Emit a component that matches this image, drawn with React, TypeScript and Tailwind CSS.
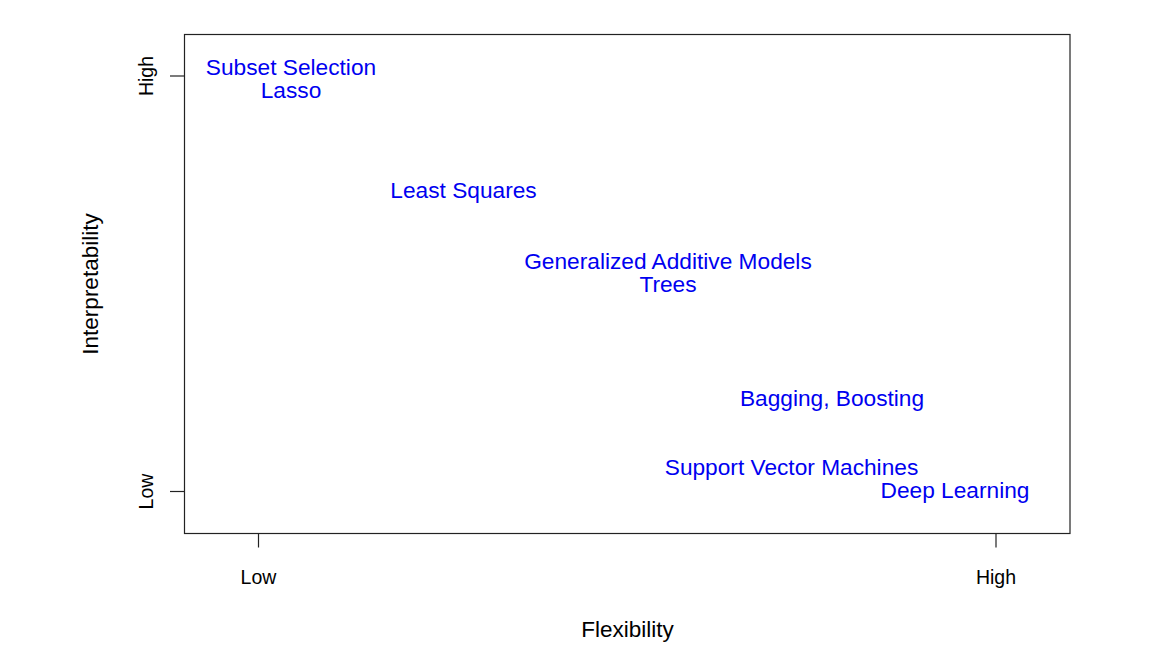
const LABELS = [
  { text: "Subset Selection", x: 291, y: 74.5 },
  { text: "Lasso", x: 291, y: 97.5 },
  { text: "Least Squares", x: 463.5, y: 197.5 },
  { text: "Generalized Additive Models", x: 668, y: 269 },
  { text: "Trees", x: 668, y: 292 },
  { text: "Bagging, Boosting", x: 832, y: 406 },
  { text: "Support Vector Machines", x: 791.5, y: 474.5 },
  { text: "Deep Learning", x: 955, y: 497.5 },
];

export default function App() {
  return (
    <div className="w-[1158px] h-[659px] bg-white overflow-hidden font-['Liberation_Sans',Arial,Helvetica,sans-serif]">
      <svg width={1158} height={659} viewBox="0 0 1158 659">
        {/* plot box */}
        <rect x={184.5} y={34.5} width={885.5} height={499} fill="none" stroke="#222" strokeWidth={1.2} />

        {/* y ticks */}
        <line x1={170} y1={76} x2={184.5} y2={76} stroke="#222" strokeWidth={1.2} />
        <line x1={170} y1={491.5} x2={184.5} y2={491.5} stroke="#222" strokeWidth={1.2} />
        {/* x ticks */}
        <line x1={258.5} y1={533.5} x2={258.5} y2={547.5} stroke="#222" strokeWidth={1.2} />
        <line x1={996} y1={533.5} x2={996} y2={547.5} stroke="#222" strokeWidth={1.2} />

        {/* tick labels */}
        <text x={258.5} y={583.5} fontSize={19.5} textAnchor="middle" fill="#000">Low</text>
        <text x={996} y={583.5} fontSize={19.5} textAnchor="middle" fill="#000">High</text>
        <text transform="translate(152.5 76) rotate(-90)" fontSize={19.5} textAnchor="middle" fill="#000">High</text>
        <text transform="translate(152.5 491.5) rotate(-90)" fontSize={19.5} textAnchor="middle" fill="#000">Low</text>

        {/* axis titles */}
        <text x={627.5} y={636.5} fontSize={22.5} textAnchor="middle" fill="#000">Flexibility</text>
        <text transform="translate(97.5 284) rotate(-90)" fontSize={22.5} textAnchor="middle" fill="#000">Interpretability</text>

        {/* method labels */}
        {LABELS.map((l) => (
          <text key={l.text} x={l.x} y={l.y} fontSize={22.7} textAnchor="middle" fill="#0000f0">
            {l.text}
          </text>
        ))}
      </svg>
    </div>
  );
}
